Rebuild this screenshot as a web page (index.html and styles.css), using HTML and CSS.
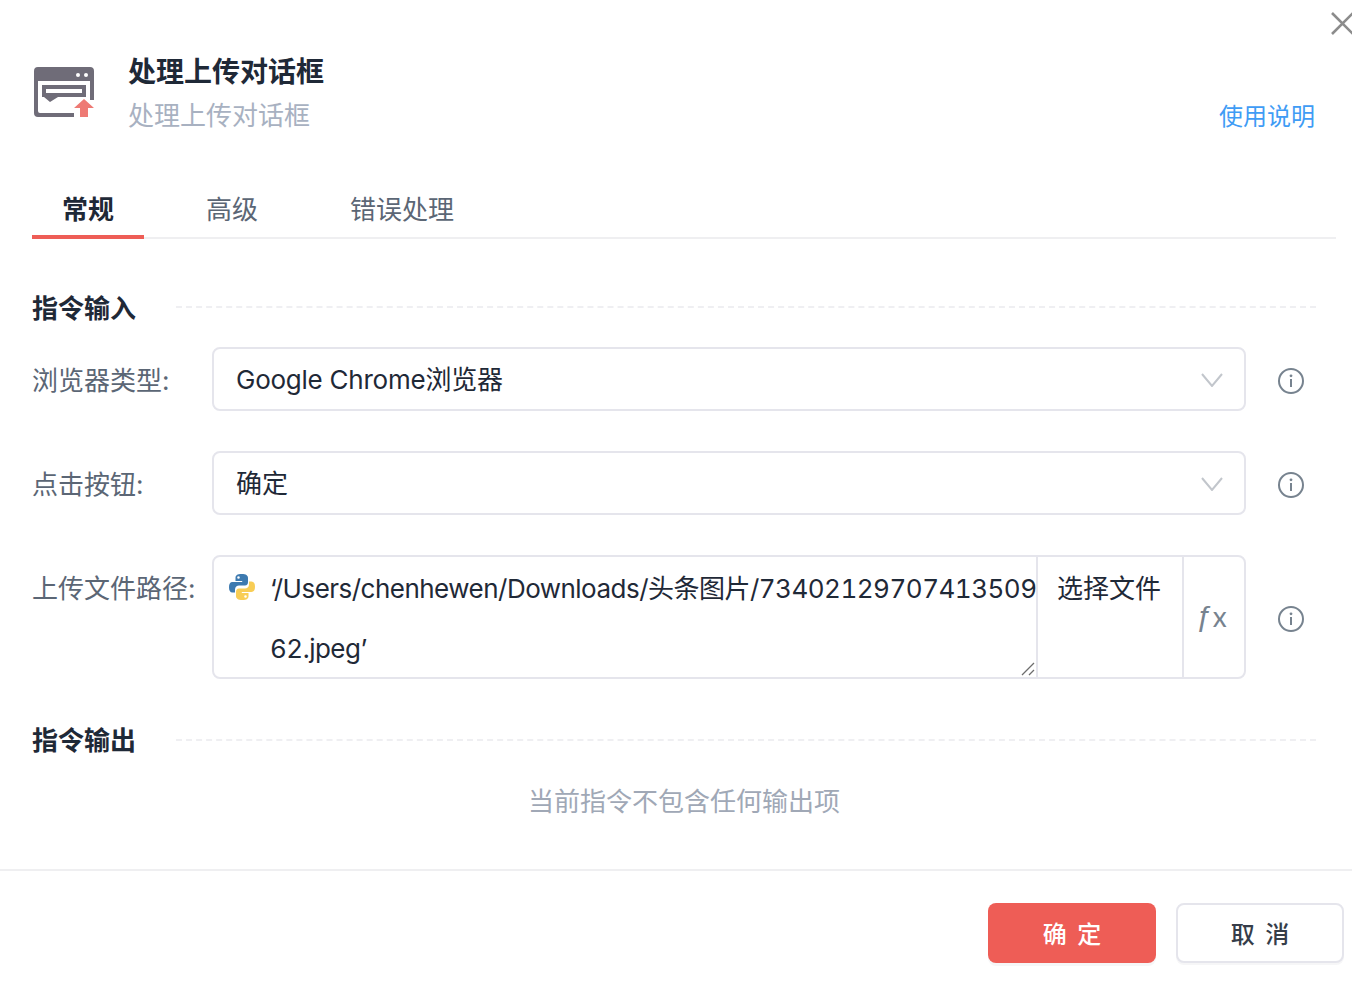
FILE: index.html
```html
<!DOCTYPE html>
<html lang="zh-CN">
<head>
<meta charset="utf-8">
<title>处理上传对话框</title>
<link rel="stylesheet" href="styles.css">
</head>
<body>
<div class="dialog">
  <button class="close" aria-label="关闭">
    <svg width="24" height="24" viewBox="0 0 24 24"><path d="M2 2 L23 23 M23 2 L2 23" stroke="#8c8c8c" stroke-width="2.600" fill="none"/></svg>
  </button>
  <header class="head">
    <svg class="logo" width="60" height="50" viewBox="0 0 60 50">
      <path fill="#6f6c78" d="M4 0H56a4 4 0 0 1 4 4V33H56V14H4V44a2 2 0 0 0 2 2H40V50H4a4 4 0 0 1-4-4V4a4 4 0 0 1 4-4Z"/>
      <circle cx="44" cy="8" r="2" fill="#fff"/>
      <circle cx="52" cy="8" r="2" fill="#fff"/>
      <path fill="#6f6c78" fill-rule="evenodd" d="M8 18H52V30H24L16 35L10 30H8ZM12 22V26H48V22Z"/>
      <path fill="#ee7a74" d="M50 32L60 41H54V50H46V41H40Z"/>
    </svg>
    <div class="head-text">
      <div class="title">处理上传对话框</div>
      <div class="subtitle">处理上传对话框</div>
    </div>
    <a class="help">使用说明</a>
  </header>
  <nav class="tabs">
    <div class="tab active">常规</div>
    <div class="tab">高级</div>
    <div class="tab">错误处理</div>
  </nav>
  <main class="body">
    <div class="section first"><span class="section-name">指令输入</span><span class="dash"></span></div>
    <div class="row">
      <label class="label">浏览器类型:</label>
      <div class="field select"><span class="tight">Google Chrome浏览器</span>
        <svg class="chev" width="22" height="14" viewBox="0 0 22 14"><path d="M1 1L11 13L21 1" fill="none" stroke="#c2c6cc" stroke-width="2"/></svg>
      </div>
      <svg class="info" width="28" height="28" viewBox="0 0 28 28"><circle cx="14" cy="14" r="12" fill="none" stroke="#77838f" stroke-width="2"/><circle cx="14" cy="8.800" r="1.400" fill="#77838f"/><path d="M14 12V20" stroke="#77838f" stroke-width="2"/></svg>
    </div>
    <div class="row">
      <label class="label">点击按钮:</label>
      <div class="field select"><span>确定</span>
        <svg class="chev" width="22" height="14" viewBox="0 0 22 14"><path d="M1 1L11 13L21 1" fill="none" stroke="#c2c6cc" stroke-width="2"/></svg>
      </div>
      <svg class="info" width="28" height="28" viewBox="0 0 28 28"><circle cx="14" cy="14" r="12" fill="none" stroke="#77838f" stroke-width="2"/><circle cx="14" cy="8.800" r="1.400" fill="#77838f"/><path d="M14 12V20" stroke="#77838f" stroke-width="2"/></svg>
    </div>
    <div class="row tall">
      <label class="label">上传文件路径:</label>
      <div class="field path">
        <div class="path-input">
          <svg class="py" width="28" height="28" viewBox="0 0 28 28">
            <path fill="#3d7ab0" d="M13.800 1C9 1 7.500 2.500 7.500 5V8H14.200V9H4.500C2 9 1 11 1 14.200S2 19.500 4.500 19.500H7V16.500C7 14 9 12.500 11 12.500H17C19 12.500 20 11 20 9V5C20 2.500 18 1 13.800 1ZM10.500 3.200a1.300 1.300 0 1 1 0 2.600a1.300 1.300 0 1 1 0-2.600Z" fill-rule="evenodd"/>
            <path fill="#f8cd55" d="M14.200 27C19 27 20.500 25.500 20.500 23V20H13.800V19H23.500C26 19 27 17 27 13.800S26 8.500 23.500 8.500H21V11.500C21 14 19 15.500 17 15.500H11C9 15.500 8 17 8 19V23C8 25.500 10 27 14.200 27ZM17.500 24.800a1.300 1.300 0 1 1 0-2.600a1.300 1.300 0 1 1 0 2.600Z" fill-rule="evenodd"/>
          </svg>
          <div class="path-text">‘/Users/chenhewen/Downloads/头条图片/7340212970741350962.jpeg’</div>
          <svg class="grip" width="14" height="14" viewBox="0 0 14 14"><path d="M1 13L13 1M8 13L13 8" stroke="#6d6d6d" stroke-width="1.300" fill="none"/></svg>
        </div>
        <div class="pick">选择文件</div>
        <div class="fx"><span class="fx-f">ƒ</span><span class="fx-x">x</span></div>
      </div>
      <svg class="info" width="28" height="28" viewBox="0 0 28 28"><circle cx="14" cy="14" r="12" fill="none" stroke="#77838f" stroke-width="2"/><circle cx="14" cy="8.800" r="1.400" fill="#77838f"/><path d="M14 12V20" stroke="#77838f" stroke-width="2"/></svg>
    </div>
    <div class="section output"><span class="section-name">指令输出</span><span class="dash"></span></div>
    <div class="empty">当前指令不包含任何输出项</div>
  </main>
  <footer class="foot">
    <button class="btn primary">确 定</button>
    <button class="btn ghost">取 消</button>
  </footer>
</div>
</body>
</html>
```
FILE: styles.css
```css
* { box-sizing: border-box; }
html, body { margin: 0; padding: 0; background: #fff; }
body {
  width: 1352px;
  height: 984px;
  overflow: hidden;
  font-family: Inter, "Noto Sans CJK SC", sans-serif;
  color: #1f2937;
}
.dialog { position: relative; width: 1352px; height: 984px; overflow: hidden; }
.close {
  position: absolute;
  top: 11px;
  left: 1330px;
  padding: 0;
  border: 0;
  background: none;
  line-height: 0;
}
.head {
  display: flex;
  align-items: flex-start;
  height: 180px;
  padding: 53px 37px 0 34px;
}
.logo { margin-top: 14px; flex: none; }
.head-text { margin-left: 34px; }
.title { font-size: 28px; line-height: 38px; font-weight: 600; color: #1f2937; }
.subtitle { font-size: 26px; line-height: 36px; margin-top: 7px; color: #a8b1c1; }
.help { margin-left: auto; margin-top: 46px; font-size: 24px; line-height: 36px; color: #3f9cf5; }
.tabs {
  display: flex;
  gap: 32px;
  margin: 0 16px 0 32px;
  height: 59px;
  border-bottom: 2px solid #efeff1;
}
.tab {
  height: 59px;
  padding: 11px 30px 0;
  font-size: 26px;
  line-height: 38px;
  color: #5b6675;
}
.tab.active { font-weight: 700; color: #1f2937; border-bottom: 4px solid #ee5d56; }
.body { padding: 0 36px 0 32px; }
.section { display: flex; align-items: center; height: 36px; }
.section.first { margin-top: 52px; }
.section.output { margin-top: 44px; }
.section-name { font-size: 26px; line-height: 36px; font-weight: 600; color: #1f2937; }
.dash { flex: 1; margin-left: 40px; margin-top: -2px; border-top: 2px dashed #efeff2; }
.section.first .dash { margin-top: -4px; }
.row { display: flex; align-items: center; margin-top: 40px; }
.section.first + .row { margin-top: 20px; }
.label { width: 180px; flex: none; padding-top: 3px; font-size: 26px; line-height: 36px; color: #5b6675; }
.field {
  width: 1034px;
  flex: none;
  border: 2px solid #e5e5ec;
  border-radius: 8px;
  font-size: 26px;
  background: #fff;
}
.select {
  display: flex;
  align-items: center;
  justify-content: space-between;
  height: 64px;
  padding: 2px 21px 0 22px;
  line-height: 36px;
}
.tight { letter-spacing: -0.240px; }
.chev { margin-top: -1px; }
.info { flex: none; margin-left: 31px; margin-top: 4px; }
.row.tall { align-items: center; }
.row.tall .label { align-self: flex-start; margin-top: 13px; }
.path { display: flex; height: 124px; }
.path-input { position: relative; display: flex; width: 822px; flex: none; padding: 0 0 0 14px; }
.py { flex: none; margin-top: 16px; }
.path-text {
  flex: none;
  margin-left: 14px;
  margin-top: 2px;
  width: 770px;
  line-height: 60px;
  word-break: break-all;
  letter-spacing: -0.520px;
  font-variant-numeric: tabular-nums;
}
.grip { position: absolute; right: 1px; bottom: 1px; }
.pick {
  width: 148px;
  flex: none;
  border-left: 2px solid #e5e5ec;
  border-right: 2px solid #e5e5ec;
  padding: 2px 0 0 19px;
  line-height: 60px;
}
.fx {
  flex: 1;
  display: flex;
  align-items: center;
  justify-content: center;
  padding: 0 5px 2px 0;
  color: #77838f;
}
.fx-f { font-family: "Liberation Sans", sans-serif; font-size: 30px; line-height: 36px; }
.fx-x { font-family: Lato, sans-serif; font-size: 28px; line-height: 36px; }
.empty { margin-top: 25px; padding-left: 20px; text-align: center; font-size: 26px; line-height: 36px; color: #a0a8b6; }
.foot {
  position: relative;
  display: flex;
  justify-content: flex-end;
  gap: 20px;
  margin-top: 49px;
  padding: 32px 8px 0 0;
  border-top: 2px solid #efeff1;
}
.btn {
  width: 168px;
  height: 60px;
  padding: 0 0 2px 2px;
  border-radius: 8px;
  font-family: Inter, "Noto Sans CJK SC", sans-serif;
  font-size: 24px;
  font-weight: 500;
  letter-spacing: 2px;
}
.primary { border: 0; background: #ee5d56; color: #fff; box-shadow: 0 3px 0 #f6f6f7; }
.ghost { border: 2px solid #e5e5ec; background: #fff; color: #363d49; box-shadow: 0 2px 0 #f6f6f7; }
```
